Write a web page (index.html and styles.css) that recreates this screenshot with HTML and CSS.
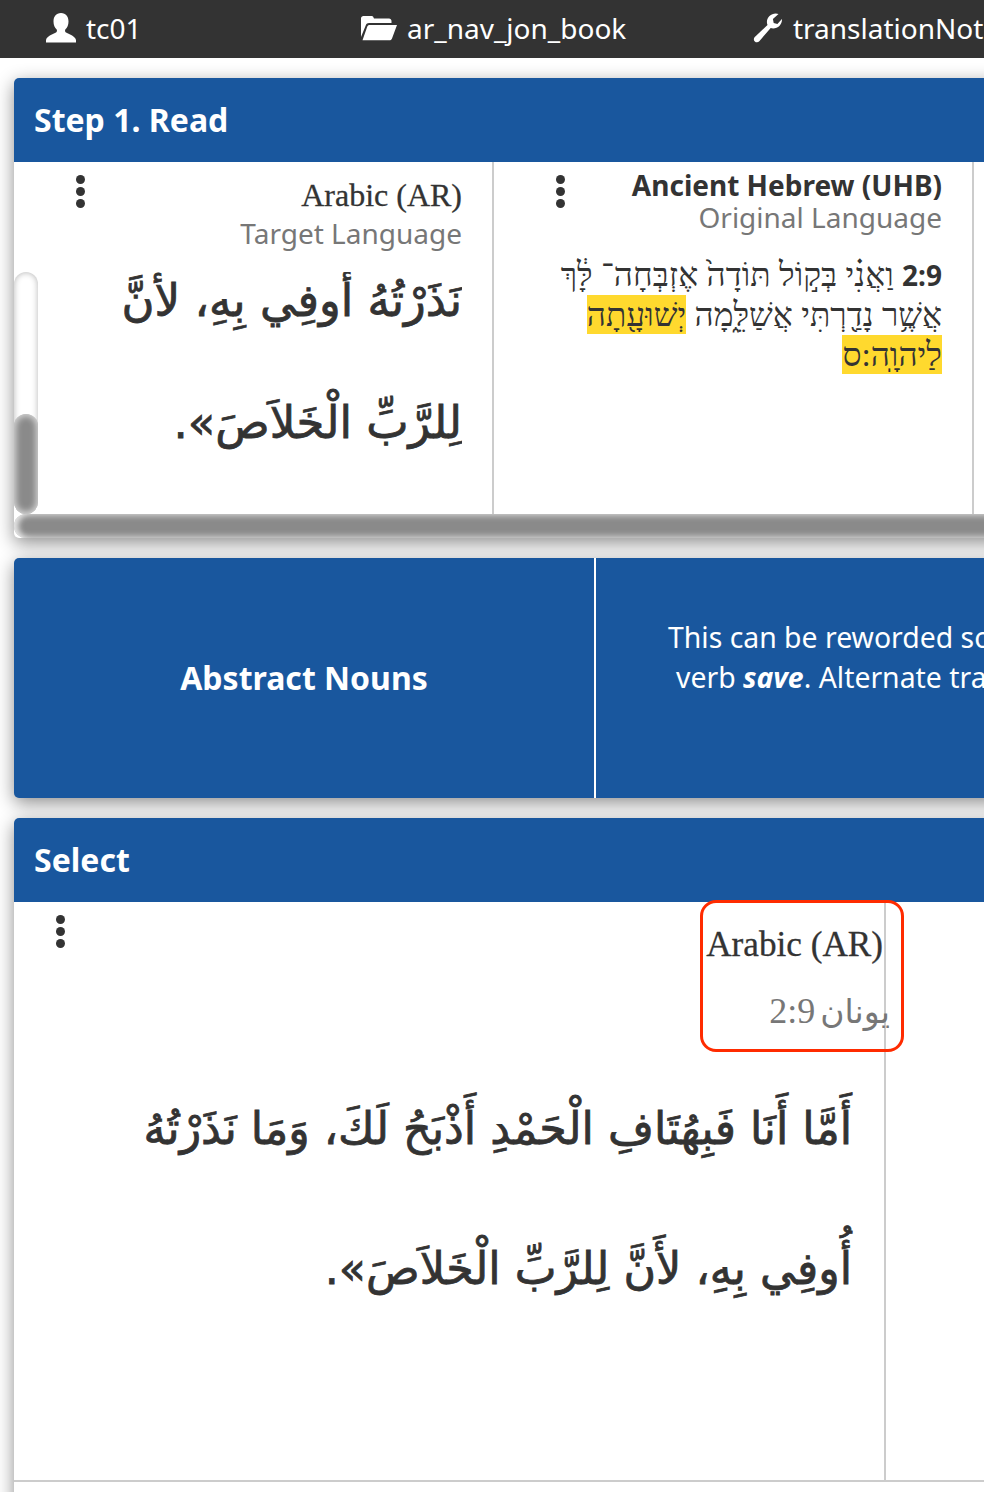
FILE: index.html
```html
<!DOCTYPE html>
<html lang="en">
<head>
  <meta charset="UTF-8">
  <meta name="viewport" content="width=device-width, initial-scale=1.0">
  <title>translationNotes</title>
  <link rel="stylesheet" href="styles.css">
</head>
<body>
  <!-- Top Bar -->
  <div class="topbar">
    <div class="crumb crumb-user">
      <svg class="crumb-icon" viewBox="0 0 32 32" width="32" height="32"><path fill="#fff" d="M16 1c-5 0-7.500 3.600-7.500 8.500 0 3.500 1.300 6.200 3.200 8 .5 1 .3 2.300-.7 3C7 22.500 2 24 1 28v2.500h30V28c-1-4-6-5.500-10-7.500-1-.7-1.200-2-.7-3 1.900-1.800 3.200-4.500 3.200-8C23.500 4.600 21 1 16 1z"/></svg>
      <span>tc01</span>
    </div>
    <div class="crumb crumb-project">
      <svg class="crumb-icon" viewBox="0 0 38 26" width="38" height="26"><path fill="#fff" d="M1 3.500C1 2 2 1 3.500 1h8c1 0 1.700.5 2 1.500l.5 1h15c1.400 0 2.500 1 2.500 2.500v2H9c-1.500 0-2.700.8-3.200 2.200L1 22zM9.500 10H37l-5 13.500c-.4 1.200-1.300 1.800-2.500 1.800H2.500L7.300 11.600c.4-1 1.200-1.600 2.200-1.600z"/></svg>
      <span>ar_nav_jon_book</span>
    </div>
    <div class="crumb crumb-tool">
      <svg class="crumb-icon" viewBox="0 0 30 30" width="30" height="30"><path fill="#fff" d="M29 6.500c0 5-4 9-8.800 9-1 0-1.700-.1-2.500-.4L6.300 28.200c-1.300 1.400-3.200 1.400-4.500.2-1.300-1.300-1.300-3.200 0-4.500L14.500 12c-.4-1-.6-1.900-.6-3C13.900 4.300 18 .5 22.700.5c1 0 2 .2 2.800.6l-5.600 5 .8 3.800 3.700 1 5-5.300c-.2 0-.4.400-.4.900z"/></svg>
      <span>translationNotes</span>
    </div>
  </div>

  <!-- Step 1 Card -->
  <div class="card card-read">
    <div class="card-title">Step 1. Read</div>
    <div class="read-panes">
      <div class="pane">
        <div class="kebab"><i></i><i></i><i></i></div>
        <div class="pane-label serif">Arabic (AR)</div>
        <div class="pane-sub">Target Language</div>
        <div class="pane-scroll" dir="rtl">
          <p class="arabic arabic-small">نَذَرْتُهُ أُوفِي بِهِ، لأَنَّ<br>لِلرَّبِّ الْخَلاَصَ».</p>
        </div>
      </div>
      <div class="pane pane-orig">
        <div class="kebab"><i></i><i></i><i></i></div>
        <div class="pane-label bold">Ancient Hebrew (UHB)</div>
        <div class="pane-sub">Original Language</div>
        <p class="hebrew" dir="rtl"><b dir="ltr">2:9</b> וַאֲנִ֗י בְּק֣וֹל תּוֹדָה֙ אֶזְבְּחָה־ לָּ֔ךְ<br>אֲשֶׁ֥ר נָדַ֖רְתִּי אֲשַׁלֵּ֑מָה <mark>יְשׁוּעָ֖תָה</mark><br><mark>לַיהוָֽה:ס</mark></p>
      </div>
      <div class="pane pane-rest"></div>
    </div>
    <div class="scroll-v"><div class="scroll-v-thumb"></div></div>
    <div class="scroll-h"></div>
  </div>

  <!-- Check Info Card -->
  <div class="card card-info">
    <div class="info-name">Abstract Nouns</div>
    <div class="info-text">
      <span class="info-line">This can be reworded so that the idea of salvation is expressed with the</span>
      <span class="info-line info-line-second">verb <b><em>save</em></b>. Alternate translation: Yahweh is the one who saves</span>
    </div>
  </div>

  <!-- Select Card -->
  <div class="card card-select">
    <div class="card-title">Select</div>
    <div class="select-body">
      <div class="select-pane">
        <div class="kebab"><i></i><i></i><i></i></div>
        <div class="select-head">
          <div class="select-label">Arabic (AR)</div>
          <div class="select-ref"><span dir="ltr"><span class="select-ref-book">يونان</span> 2:9</span></div>
        </div>
        <p class="arabic arabic-large" dir="rtl">أَمَّا أَنَا فَبِهُتَافِ الْحَمْدِ أَذْبَحُ لَكَ، وَمَا نَذَرْتُهُ<br>أُوفِي بِهِ، لأَنَّ لِلرَّبِّ الْخَلاَصَ».</p>
      </div>
    </div>
    <div class="callout"></div>
  </div>
</body>
</html>
```

FILE: styles.css
```css
/* CSS Reset */
* {
  margin: 0;
  padding: 0;
  box-sizing: border-box;
}

html, body {
  height: 1492px;
  overflow: hidden;
}

body {
  font-family: 'Noto Sans', sans-serif;
  background: #fff;
  color: #333;
  width: 984px;
}

/* Top Bar */
.topbar {
  height: 58px;
  background: #333;
  color: #fff;
  display: flex;
  align-items: center;
  font-size: 28px;
  white-space: nowrap;
  overflow: hidden;
  padding-bottom: 2px;
}

.crumb {
  display: flex;
  align-items: center;
  gap: 9px;
  flex: none;
}

.crumb-user {
  margin-left: 45px;
  width: 315px;
}

.crumb-project {
  width: 393px;
}

.crumb-tool {
  gap: 10px;
}

/* Cards */
.card {
  position: relative;
  width: 1400px;
  margin-left: 14px;
  border-radius: 5px 0 0 5px;
  box-shadow: 0 5px 18px rgba(0, 0, 0, 0.45);
  background: #fff;
}

.card-title {
  height: 84px;
  padding: 0 0 2px 20px;
  display: flex;
  align-items: center;
  background: #19579e;
  color: #fff;
  font-size: 32px;
  font-weight: 700;
  border-radius: 5px 0 0 0;
}

.card-read {
  margin-top: 20px;
  height: 460px;
}

.read-panes {
  display: flex;
  height: 352px;
}

.pane {
  position: relative;
  width: 480px;
  flex: none;
  padding: 16px 30px 0 0;
  text-align: right;
  border-right: 2px solid #ccc;
}

.pane-orig {
  padding-top: 6px;
}

.pane-rest {
  border-right: 0;
}

.kebab {
  position: absolute;
  left: 62px;
  top: 13px;
  display: flex;
  flex-direction: column;
  gap: 3px;
}

.kebab i {
  display: block;
  width: 9px;
  height: 9px;
  border-radius: 50%;
  background: #333;
}

.pane-label {
  font-size: 28px;
  line-height: 34px;
}

.serif {
  font-family: 'Liberation Serif', serif;
  font-size: 32px;
  -webkit-text-stroke: 0.3px #333;
}

.bold {
  font-weight: 700;
}

.pane-sub {
  font-size: 28px;
  line-height: 31px;
  color: #777;
}

.serif + .pane-sub {
  margin-top: 3px;
  line-height: 36px;
}

.pane-scroll {
  height: 242px;
  margin-top: 21px;
  overflow: hidden;
}

.arabic {
  font-family: 'DejaVu Sans', sans-serif;
  color: #333;
  -webkit-text-stroke: 0.8px #333;
}

.arabic-small {
  font-size: 45px;
  line-height: 122px;
  margin-top: -32px;
}

.hebrew {
  margin-top: 22px;
  font-family: 'Liberation Serif', serif;
  font-size: 33.400px;
  line-height: 40px;
}

.hebrew b {
  font-family: 'Noto Sans', sans-serif;
  font-size: 28px;
}

mark {
  background: #ffd92e;
  color: #333;
  padding: 1px 0;
}

/* Fake scrollbars */
.scroll-v {
  position: absolute;
  left: 0;
  top: 194px;
  width: 24px;
  height: 242px;
  border-radius: 12px;
  box-shadow: inset 0 0 6px rgba(0, 0, 0, 0.3);
}

.scroll-v-thumb {
  position: absolute;
  left: 0;
  bottom: 0;
  width: 24px;
  height: 100px;
  border-radius: 12px;
  background: #8a8a8a;
  box-shadow: inset 0 0 6px 2px rgba(255, 255, 255, 0.65);
}

.scroll-h {
  position: absolute;
  left: 0;
  top: 436px;
  width: 100%;
  height: 24px;
  border-radius: 12px 0 0 12px;
  background: #8a8a8a;
  box-shadow: inset 6px 0 6px -2px rgba(255, 255, 255, 0.65), inset 0 0 6px 2px rgba(255, 255, 255, 0.5);
}

/* Check Info Card */
.card-info {
  margin-top: 20px;
  height: 240px;
  display: flex;
  background: #19579e;
  color: #fff;
}

.info-name {
  width: 582px;
  flex: none;
  display: flex;
  align-items: center;
  justify-content: center;
  border-right: 2px solid #fff;
  font-size: 32px;
  font-weight: 700;
  padding-bottom: 2px;
}

.info-text {
  width: 804px;
  flex: none;
  padding: 59px 0 0 72px;
  font-size: 28.4px;
  line-height: 40px;
  white-space: nowrap;
}

.info-line {
  display: block;
}

.info-line-second {
  margin-left: 8px;
}

/* Select Card */
.card-select {
  margin-top: 20px;
  height: 700px;
}

.select-body {
  height: 580px;
  border-bottom: 2px solid #ccc;
}

.select-pane {
  position: relative;
  width: 872px;
  height: 100%;
  border-right: 2px solid #ccc;
}

.select-pane .kebab {
  left: 42px;
}

.select-head {
  padding: 23px 0 0;
  width: 869px;
  text-align: right;
  font-family: 'Liberation Serif', serif;
}

.select-label {
  font-size: 35.200px;
  line-height: 40px;
  -webkit-text-stroke: 0.3px #333;
}

.select-ref {
  margin-top: 24px;
  font-size: 36px;
  line-height: 44px;
  color: #777;
  margin-right: -7px;
  word-spacing: -4px;
}

.select-ref-book {
  font-family: 'DejaVu Sans', sans-serif;
  font-size: 33px;
}

.arabic-large {
  margin-top: 25px;
  padding-right: 32px;
  font-size: 44.400px;
  line-height: 140px;
  text-align: right;
  white-space: nowrap;
}

.callout {
  position: absolute;
  left: 686px;
  top: 82px;
  width: 204px;
  height: 152px;
  border: 3px solid #ff2b00;
  border-radius: 16px;
}
```
